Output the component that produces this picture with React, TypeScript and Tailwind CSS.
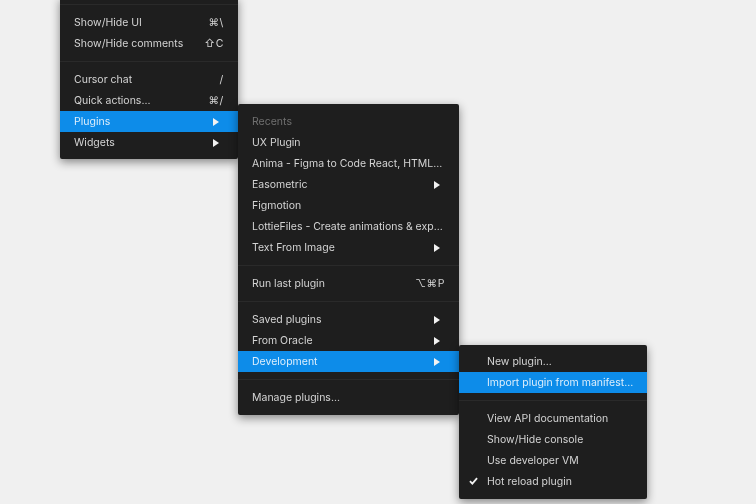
import React from "react";

type Item =
  | { sep: true }
  | { label: string; shortcut?: string; arrow?: boolean; active?: boolean; muted?: boolean; checked?: boolean };

const Arrow = () => (
  <svg width="6" height="8" viewBox="0 0 6 8" className="mr-[5px] shrink-0">
    <polygon points="0,0 6,4 0,8" fill="#f2f2f2" />
  </svg>
);

const Check = () => (
  <svg width="9" height="8" viewBox="0 0 10 9" className="absolute left-[10px] top-[6px]">
    <path d="M1 4.6 L3.7 7.4 L9 1.2" fill="none" stroke="#f2f2f2" strokeWidth="2" />
  </svg>
);

function Row({ item, indent }: { item: Exclude<Item, { sep: true }>; indent?: boolean }) {
  const bg = item.active ? "bg-[#0d8ce9] text-[#dceefc]" : item.muted ? "text-[#6f6f6f]" : "text-[#d4d4d4]";
  return (
    <div className={`relative flex h-[21px] items-center justify-between pr-[14px] ${indent ? "pl-[28px]" : "pl-[14px]"} ${bg}`}>
      {item.checked && <Check />}
      <span className="whitespace-nowrap">{item.label}</span>
      {item.shortcut && <span className="whitespace-nowrap tracking-[0.6px]">{item.shortcut}</span>}
      {item.arrow && <Arrow />}
    </div>
  );
}

function Menu({ items, className, indent }: { items: Item[]; className: string; indent?: boolean }) {
  return (
    <div className={`absolute bg-[#1e1e1e] rounded-[2px] text-[10.5px] leading-[21px] shadow-[0_3px_10px_rgba(0,0,0,0.45)] ${className}`}>
      {items.map((item, i) =>
        "sep" in item ? (
          <div key={i} className="flex h-[15px] items-center">
            <div className="h-px w-full bg-[#2a2a2a]" />
          </div>
        ) : (
          <Row key={i} item={item} indent={indent} />
        )
      )}
    </div>
  );
}

const first: Item[] = [
  { sep: true },
  { label: "Show/Hide UI", shortcut: "⌘\\" },
  { label: "Show/Hide comments", shortcut: "⇧C" },
  { sep: true },
  { label: "Cursor chat", shortcut: "/" },
  { label: "Quick actions...", shortcut: "⌘/" },
  { label: "Plugins", arrow: true, active: true },
  { label: "Widgets", arrow: true },
];

const second: Item[] = [
  { label: "Recents", muted: true },
  { label: "UX Plugin" },
  { label: "Anima - Figma to Code React, HTML..." },
  { label: "Easometric", arrow: true },
  { label: "Figmotion" },
  { label: "LottieFiles - Create animations & exp..." },
  { label: "Text From Image", arrow: true },
  { sep: true },
  { label: "Run last plugin", shortcut: "⌥⌘P" },
  { sep: true },
  { label: "Saved plugins", arrow: true },
  { label: "From Oracle", arrow: true },
  { label: "Development", arrow: true, active: true },
  { sep: true },
  { label: "Manage plugins..." },
];

const third: Item[] = [
  { label: "New plugin..." },
  { label: "Import plugin from manifest...", active: true },
  { sep: true },
  { label: "View API documentation" },
  { label: "Show/Hide console" },
  { label: "Use developer VM" },
  { label: "Hot reload plugin", checked: true },
];

export default function App() {
  return (
    <div className="relative h-[504px] w-[756px] overflow-hidden bg-[#f0f0f0] font-['Inter','DejaVu_Sans',sans-serif] blur-[0.5px]">
      <Menu items={first} className="left-[60px] top-[-3px] w-[178px] pb-[6px]" />
      <Menu items={second} className="left-[238px] top-[104px] z-10 w-[221px] py-[7px]" />
      <Menu items={third} indent className="left-[459px] top-[345px] z-20 w-[188px] pt-[6px] pb-[7px]" />
    </div>
  );
}
